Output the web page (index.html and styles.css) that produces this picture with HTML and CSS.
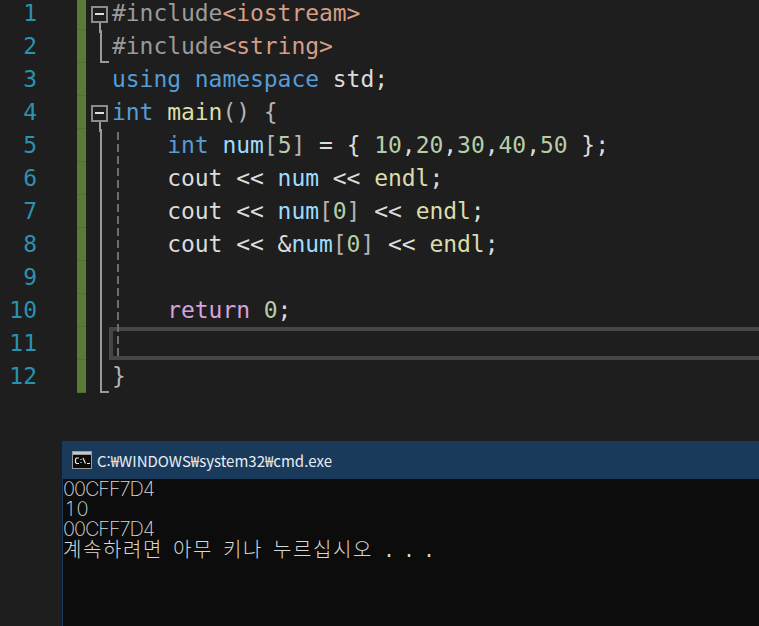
FILE: index.html
```html
<!DOCTYPE html>
<html lang="ko">
<head>
<meta charset="utf-8">
<title>cmd</title>
<link rel="stylesheet" href="styles.css">
</head>
<body>
<main class="editor">
  <div class="row"><span class="num">1</span><span class="chg"></span><span class="fold"><i class="box"></i></span><code class="code"><b class="pre">#include</b><b class="str">&lt;iostream&gt;</b></code></div>
  <div class="row"><span class="num">2</span><span class="chg"></span><span class="fold"><i class="end end-first"></i></span><code class="code"><b class="pre">#include</b><b class="str">&lt;string&gt;</b></code></div>
  <div class="row"><span class="num">3</span><span class="chg"></span><span class="fold"></span><code class="code"><b class="kw">using</b> <b class="kw">namespace</b> std;</code></div>
  <div class="row"><span class="num">4</span><span class="chg"></span><span class="fold"><i class="box"></i></span><code class="code"><b class="kw">int</b> <b class="fn">main</b><b class="br">()</b> <b class="br">{</b></code></div>
  <div class="row"><span class="num">5</span><span class="chg"></span><span class="fold"><i class="bar"></i></span><code class="code in"><b class="kw">int</b> <b class="var">num</b><b class="br">[</b><b class="lit">5</b><b class="br">]</b> = { <b class="lit">10</b>,<b class="lit">20</b>,<b class="lit">30</b>,<b class="lit">40</b>,<b class="lit">50</b> };</code></div>
  <div class="row"><span class="num">6</span><span class="chg"></span><span class="fold"><i class="bar"></i></span><code class="code in">cout &lt;&lt; <b class="var">num</b> &lt;&lt; <b class="fn">endl</b>;</code></div>
  <div class="row"><span class="num">7</span><span class="chg"></span><span class="fold"><i class="bar"></i></span><code class="code in">cout &lt;&lt; <b class="var">num</b><b class="br">[</b><b class="lit">0</b><b class="br">]</b> &lt;&lt; <b class="fn">endl</b>;</code></div>
  <div class="row"><span class="num">8</span><span class="chg"></span><span class="fold"><i class="bar"></i></span><code class="code in">cout &lt;&lt; &amp;<b class="var">num</b><b class="br">[</b><b class="lit">0</b><b class="br">]</b> &lt;&lt; <b class="fn">endl</b>;</code></div>
  <div class="row"><span class="num">9</span><span class="chg"></span><span class="fold"><i class="bar"></i></span><code class="code in"></code></div>
  <div class="row"><span class="num">10</span><span class="chg"></span><span class="fold"><i class="bar"></i></span><code class="code in"><b class="ret">return</b> <b class="lit">0</b>;</code></div>
  <div class="row"><span class="num">11</span><span class="chg"></span><span class="fold"><i class="bar"></i></span><code class="code current"></code></div>
  <div class="row"><span class="num">12</span><span class="chg"></span><span class="fold"><i class="end"></i></span><code class="code"><b class="br">}</b></code></div>
  <i class="guide"></i>
</main>
<section class="console">
  <header class="titlebar">
    <svg class="cmd-icon" width="20" height="18" viewBox="0 0 20 18">
      <rect x="0" y="0" width="20" height="18" fill="#9a9a9a"/>
      <rect x="1" y="1" width="18" height="2" fill="#c8c8c8"/>
      <rect x="1" y="4" width="18" height="13" fill="#0a0a0a"/>
      <path d="M7 7H4.5L3.5 8V11.5L4.5 12.5H7M9 8V9M9 11V12M11 7L13.5 12.5M15 12.5H18" fill="none" stroke="#e8e8e8" stroke-width="1.2"/>
    </svg>
    <span class="title">C:₩WINDOWS₩system32₩cmd.exe</span>
  </header>
  <pre class="output">00CFF7D4
<span class="wide">10</span>
00CFF7D4
<span class="prompt"><span class="ko">계속하려면</span> <span class="ko">아무</span> <span class="ko">키나</span> <span class="ko">누르십시오</span> . . .</span></pre>
</section>
</body>
</html>
```
FILE: styles.css
```css
html, body {
  margin: 0;
  height: 626px;
  overflow: hidden;
  background: #1e1e1e;
}
body {
  display: flex;
  flex-direction: column;
}
.editor {
  position: relative;
  height: 444px;
  margin-top: -3px;
  font: 23px/33px "DejaVu Sans Mono", monospace;
  color: #dcdcdc;
}
.row {
  display: flex;
  height: 33px;
}
.num {
  width: 37px;
  margin-right: 40px;
  text-align: right;
  color: #2b91af;
}
.chg {
  width: 9px;
  background: #5b7a33;
  box-shadow: inset 0 -1px 0 #526f2f;
}
.fold {
  position: relative;
  width: 26px;
}
.box {
  position: absolute;
  left: 5px;
  top: 9px;
  width: 13px;
  height: 13px;
  border: 2px solid #8c8c8c;
}
.box::before {
  content: "";
  position: absolute;
  left: 2px;
  top: 5px;
  width: 9px;
  height: 2px;
  background: #dedede;
}
.box::after {
  content: "";
  position: absolute;
  left: 6px;
  top: 15px;
  width: 2px;
  height: 10px;
  background: #9a9a9a;
}
.bar, .end {
  position: absolute;
  left: 14px;
  top: 0;
  bottom: 0;
  width: 2px;
  background: #9a9a9a;
}
.end::after {
  content: "";
  position: absolute;
  left: 0;
  bottom: 0;
  width: 9px;
  height: 2px;
  background: #9a9a9a;
}
.code {
  flex: 1;
  font: inherit;
  letter-spacing: -0.05px;
  white-space: pre;
}
.code b {
  font-weight: 400;
}
.in {
  padding-left: 55.2px;
}
.current {
  margin-left: -3px;
  border: 4px solid #464646;
  border-right: 0;
  box-sizing: border-box;
}
.pre { color: #9b9b9b; }
.str { color: #d69d85; }
.kw { color: #569cd6; }
.fn { color: #dcdcaa; }
.var { color: #9cdcfe; }
.lit { color: #b5cea8; }
.ret { color: #d8a0df; }
.br { color: #b4b4b4; }
.guide {
  position: absolute;
  left: 117px;
  top: 135px;
  width: 2px;
  height: 228px;
  background: repeating-linear-gradient(to bottom, #6e6e6e 0 8px, transparent 8px 12px);
}
.console {
  flex: 1;
  display: flex;
  flex-direction: column;
  margin-left: 62px;
  border-left: 1px solid #1a3a5c;
  background: #0c0c0c;
}
.titlebar {
  display: flex;
  align-items: center;
  gap: 5px;
  height: 38px;
  padding-left: 9px;
  background: #1a3a5c;
}
.title {
  font: 15px "Noto Sans CJK KR", "Open Sans", sans-serif;
  color: #e6edf3;
}
.output {
  margin: 0;
  font: 200 20px/20px "Inter", "Noto Sans CJK KR", sans-serif;
  letter-spacing: -1.1px;
  color: #d8d8d8;
}
.wide {
  padding-left: 3px;
  letter-spacing: 3px;
}
.prompt {
  font-family: "Liberation Mono", monospace;
  font-weight: 400;
  letter-spacing: -2px;
}
.ko {
  font-family: "Noto Sans CJK KR", sans-serif;
  font-weight: 300;
  letter-spacing: 1.6px;
}
```
